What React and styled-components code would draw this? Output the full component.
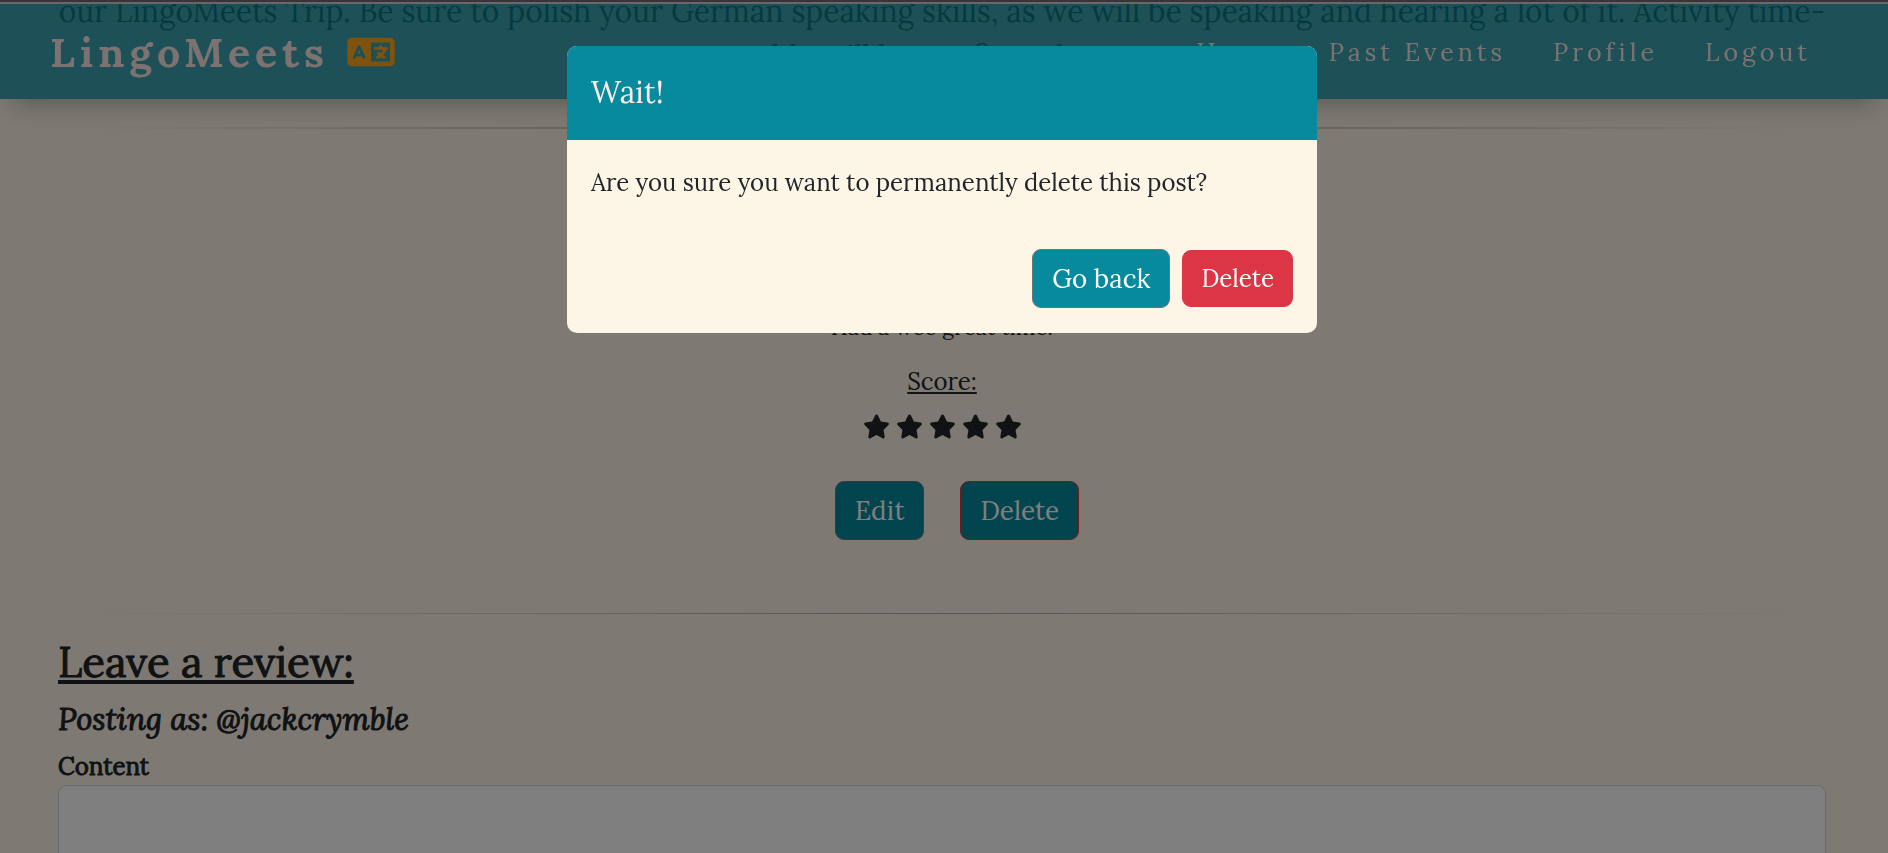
import React from "react";
import styled, { createGlobalStyle } from "styled-components";
import { FaLanguage, FaStar } from "react-icons/fa6";

const teal = "#078a9d";
const cream = "#fdf5e6";
const ink = "#212529";

const GlobalStyle = createGlobalStyle`
  *, *::before, *::after { box-sizing: border-box; }
  html { height: 100%; overflow: hidden; }
  body {
    margin: 0;
    height: 100%;
    overflow: hidden;
    background: ${cream};
    color: ${ink};
    font-family: "Lora", "Liberation Serif", serif;
    font-size: 24px;
    line-height: 36px;
  }
  h1, h2, h3, p { margin: 0; padding: 0; }
`;

const WindowEdge = styled.div`
  position: fixed;
  inset: 0 0 auto;
  z-index: 3;
  height: 4px;
  background: #6b6669;
  border-top: 2px solid #363636;
`;

const NavBar = styled.header`
  position: fixed;
  inset: 0 0 auto;
  z-index: 1;
  display: flex;
  justify-content: space-between;
  align-items: flex-start;
  height: 99px;
  padding: 28px 77px 0 50px;
  background: rgba(7, 138, 157, 0.78);
  box-shadow: 0 16px 24px -12px rgba(0, 0, 0, 0.3);
`;

const Brand = styled.a`
  display: flex;
  align-items: center;
  gap: 18px;
  color: #f8e4e2;
  font-size: 41px;
  font-weight: 700;
  line-height: 48px;
  letter-spacing: 5px;
  text-decoration: none;
  svg { display: block; width: 48px; height: 38px; color: #ffa71a; }
`;

const NavLinks = styled.nav`
  display: flex;
  gap: 47px;
  a {
    color: #f8e4e2;
    font-size: 25px;
    line-height: 48px;
    letter-spacing: 4px;
    text-decoration: none;
  }
`;

const Page = styled.main`
  display: flex;
  flex-direction: column;
  padding: 0 62px 0 58px;
`;

const Description = styled.p`
  margin: -11px 0 48px;
  font-size: 30px;
  line-height: 45px;
  text-align: center;
`;

const Divider = styled.hr`
  width: 100%;
  height: ${(p) => p.$size || 1}px;
  margin: 0;
  border: 0;
  background: linear-gradient(to right, transparent, rgba(0, 0, 0, 0.3), transparent);
`;

const Review = styled.section`
  display: flex;
  flex-direction: column;
  align-items: center;
  padding: 180px 0 73px;
`;

const ReviewText = styled.p`
  font-size: 22px;
`;

const Score = styled.p`
  margin-top: 19px;
  text-decoration: underline;
`;

const Stars = styled.div`
  display: flex;
  gap: 6px;
  margin: 13px 0 41px;
  font-size: 27px;
  svg { display: block; }
`;

const Actions = styled.div`
  display: flex;
  align-items: center;
  gap: 12px;
`;

const PostActions = styled(Actions)`
  gap: 36px;
  padding-left: 30px;
`;

const DialogActions = styled(Actions)`
  justify-content: flex-end;
`;

const Button = styled.button`
  height: ${(p) => (p.$danger ? 57 : 59)}px;
  padding: 0 ${(p) => (p.$danger ? 18 : 19)}px;
  border: 1px solid ${(p) => p.$edge || "#6c757d"};
  border-radius: 9px;
  background: ${(p) => (p.$danger ? "#dc3545" : teal)};
  color: #fff;
  font-family: inherit;
  font-size: ${(p) => (p.$danger ? 24 : 26)}px;
`;

const ReviewForm = styled.form`
  display: flex;
  flex-direction: column;
  padding-top: 23px;
`;

const FormTitle = styled.h2`
  font-size: 42px;
  font-weight: 400;
  line-height: 51px;
  text-decoration: underline;
  -webkit-text-stroke: 1px ${ink};
`;

const Author = styled.h3`
  margin-top: 10px;
  font-size: 31px;
  font-style: italic;
  font-weight: 400;
  line-height: 42px;
  -webkit-text-stroke: 1px ${ink};
`;

const Label = styled.label`
  margin-top: 9px;
  -webkit-text-stroke: 1px ${ink};
`;

const TextBox = styled.textarea`
  height: 240px;
  padding: 12px;
  border: 1px solid #ced4da;
  border-radius: 9px;
  background: #fff;
  font: inherit;
  resize: none;
`;

const Backdrop = styled.div`
  position: fixed;
  inset: 0;
  z-index: 2;
  display: flex;
  align-items: flex-start;
  justify-content: center;
  padding: 46px 4px 0 0;
  background: rgba(0, 0, 0, 0.5);
`;

const Dialog = styled.section`
  width: 750px;
  max-width: 100%;
  overflow: hidden;
  border-radius: 10px;
  background: ${cream};
`;

const DialogHeader = styled.header`
  padding: 28px 24px 30px;
  background: ${teal};
  color: #fbeae6;
  h1 { font-size: 30px; font-weight: 400; line-height: 36px; }
`;

const DialogBody = styled.div`
  padding: 25px 24px;
`;

const DialogFooter = styled.footer`
  padding: 23px 24px 25px;
`;

export default function App() {
  return (
    <>
      <GlobalStyle />
      <WindowEdge />
      <NavBar>
        <Brand href="#home">
          LingoMeets
          <FaLanguage aria-hidden="true" />
        </Brand>
        <NavLinks>
          <a href="#home">Home</a>
          <a href="#past">Past Events</a>
          <a href="#profile">Profile</a>
          <a href="#logout">Logout</a>
        </NavLinks>
      </NavBar>

      <Page>
        <Description>
          our LingoMeets Trip. Be sure to polish your German speaking skills, as we will be speaking and hearing a lot of it. Activity time-
          <br />
          table will be confirmed soon
        </Description>
        <Divider $size={2} />
        <Review>
          <ReviewText>Had a wee great time!</ReviewText>
          <Score>Score:</Score>
          <Stars role="img" aria-label="5 out of 5">
            {[1, 2, 3, 4, 5].map((n) => <FaStar key={n} />)}
          </Stars>
          <PostActions>
            <Button>Edit</Button>
            <Button $edge="#dc3545">Delete</Button>
          </PostActions>
        </Review>
        <Divider />
        <ReviewForm>
          <FormTitle>Leave a review:</FormTitle>
          <Author>Posting as: @jackcrymble</Author>
          <Label htmlFor="content">Content</Label>
          <TextBox id="content" />
        </ReviewForm>
      </Page>

      <Backdrop>
        <Dialog role="dialog" aria-modal="true" aria-labelledby="confirm-title">
          <DialogHeader><h1 id="confirm-title">Wait!</h1></DialogHeader>
          <DialogBody><p>Are you sure you want to permanently delete this post?</p></DialogBody>
          <DialogFooter>
            <DialogActions>
              <Button>Go back</Button>
              <Button $danger $edge="#dc3545">Delete</Button>
            </DialogActions>
          </DialogFooter>
        </Dialog>
      </Backdrop>
    </>
  );
}
